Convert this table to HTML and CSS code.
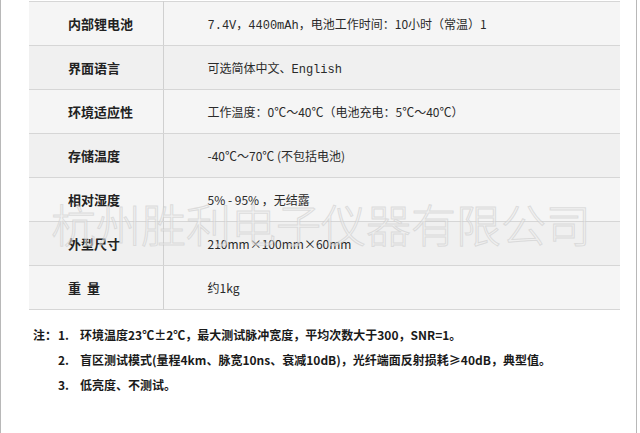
FILE: index.html
```html
<!DOCTYPE html>
<html lang="zh-CN">
<head>
<meta charset="utf-8">
<link rel="stylesheet" href="styles.css">
</head>
<body>
<div class="page">
  <div class="table-wrap">
    <table class="spec">
      <tr class="odd"><th>内部锂电池</th><td><span class="mono">7.4V，4400mAh，</span>电池工作时间：10小时（常温）1</td></tr>
      <tr class="even"><th>界面语言</th><td>可选简体中文、<span class="mono">English</span></td></tr>
      <tr class="odd"><th>环境适应性</th><td>工作温度：0℃～40℃（电池充电：5℃～40℃）</td></tr>
      <tr class="even"><th>存储温度</th><td>-40℃～70℃ (不包括电池)</td></tr>
      <tr class="odd"><th>相对湿度</th><td>5% - 95% ，无结露</td></tr>
      <tr class="even"><th>外型尺寸</th><td>210mm×100mm×60mm</td></tr>
      <tr class="odd"><th>重&nbsp;&nbsp;量</th><td>约1kg</td></tr>
    </table>
    <div class="watermark">杭州胜利电子仪器有限公司</div>
  </div>
  <div class="notes">
    <div class="note"><span class="pre">注：</span><span class="num">1.</span><span>环境温度23℃±2℃，最大测试脉冲宽度，平均次数大于300，SNR=1。</span></div>
    <div class="note"><span class="pre"></span><span class="num">2.</span><span>盲区测试模式(量程4km、脉宽10ns、衰减10dB)，光纤端面反射损耗≥40dB，典型值。</span></div>
    <div class="note"><span class="pre"></span><span class="num">3.</span><span>低亮度、不测试。</span></div>
  </div>
</div>
</body>
</html>
```

FILE: styles.css
```css
html, body {
  margin: 0;
  padding: 0;
  background: #ffffff;
}
body {
  font-family: "Noto Sans CJK SC", "Liberation Sans", sans-serif;
  color: #333333;
}
.page {
  width: 637px;
  height: 433px;
  border-left: 1px solid #b8b8b8;
  border-right: 1px solid #b8b8b8;
  box-sizing: border-box;
  padding-top: 1px;
}
.table-wrap {
  position: relative;
  margin-left: 28px;
  width: 591px;
}
.spec {
  border-collapse: collapse;
  width: 591px;
  table-layout: fixed;
}
.spec tr {
  height: 44px;
}
.spec th, .spec td {
  border-top: 1px solid #d6d6d6;
  border-bottom: 1px solid #d6d6d6;
  padding: 0;
  vertical-align: middle;
}
.spec th {
  width: 134px;
  border-right: 1px solid #d0d0d0;
  text-align: left;
  padding-left: 39px;
  box-sizing: border-box;
  font-size: 13px;
  font-weight: 700;
  color: #222222;
}
.spec td {
  padding-left: 44px;
  font-size: 12px;
  color: #2a2a2a;
}
.spec tr.odd th, .spec tr.odd td { background: #f5f5f5; }
.spec tr.even th, .spec tr.even td { background: #f0f0f0; }
.mono {
  font-family: "Liberation Mono", "Noto Sans CJK SC", monospace;
  font-size: 12px;
}
.watermark {
  position: absolute;
  left: 22px;
  top: 195px;
  font-family: "Noto Sans CJK SC", sans-serif;
  font-weight: 200;
  font-size: 45px;
  line-height: 56px;
  color: rgba(240, 240, 240, 0.5);
  -webkit-text-stroke: 1px rgba(200, 200, 200, 0.55);
  white-space: nowrap;
  pointer-events: none;
}
.notes {
  padding-left: 32px;
  padding-top: 12px;
}
.note {
  display: flex;
  height: 25px;
  align-items: center;
  font-size: 12px;
  font-weight: 700;
  color: #1a1a1a;
  white-space: nowrap;
}
.pre {
  width: 25px;
  flex: none;
}
.num {
  width: 22px;
  flex: none;
}
```
